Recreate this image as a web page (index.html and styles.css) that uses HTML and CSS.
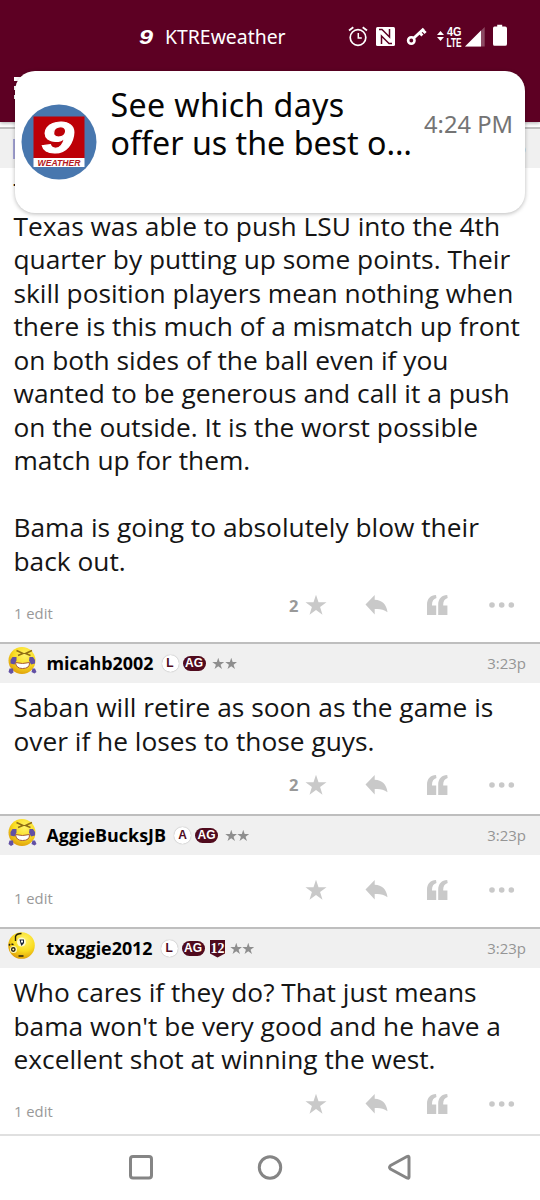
FILE: index.html
```html
<!DOCTYPE html>
<html lang="en">
<head>
<meta charset="utf-8">
<title>Forum thread</title>
<link rel="stylesheet" href="styles.css">
</head>
<body>
<svg class="defs" width="0" height="0" aria-hidden="true">
  <symbol id="star" viewBox="0 0 22 22"><path d="M11 .8l2.500 7.500h8l-6.400 4.700 2.400 7.700-6.500-4.700-6.500 4.700L6.900 13 .5 8.300h8z"/></symbol>
  <symbol id="reply" viewBox="0 0 23 20"><path d="M.5 9.500L9.700 0v4.700C17 5 21.500 9 22.500 17.200 18.500 14 14.500 13.700 9.700 14v5.500z"/></symbol>
  <symbol id="quote" viewBox="0 0 21 20"><path d="M0 20V9.500C0 4 3.500 0 9 0L9.500 3C6.500 4 5 6 5 9.500V10.500h4.200V20zM11.200 20V9.500C11.200 4 14.700 0 20.200 0L20.700 3c-3 1-4.500 3-4.500 6.500V10.500h4.200V20z"/></symbol>
  <symbol id="more" viewBox="0 0 26 6"><circle cx="3" cy="3" r="2.800"/><circle cx="12.700" cy="3" r="2.800"/><circle cx="22.300" cy="3" r="2.800"/></symbol>
  <radialGradient id="skin" cx=".6" cy=".3" r=".75"><stop offset="0" stop-color="#fff36a"/><stop offset=".55" stop-color="#f9dc20"/><stop offset="1" stop-color="#dc9908"/></radialGradient>
  <symbol id="laugh" viewBox="0 0 30 30">
    <circle cx="15" cy="14.500" r="13.500" fill="url(#skin)"/>
    <path d="M9.500 4.500l6.500 3-5 2M25 4.500l-6.500 3 5 2" fill="none" stroke="#8f6d14" stroke-width="1.500"/>
    <path d="M8.500 16.500q7 2 14 0 .5 6-7 6Q9 22.500 8.500 16.500z" fill="#fff" stroke="#a85a38" stroke-width="1"/>
    <path d="M5.500 11h4v3.500l-2 4-4-1v-3.500zM22.500 11h3.500l2 3v3.500l-4 1-2-4zM2.500 22.500h3.500l.500 4-2.500 1.500-2.500-2zM25.500 22.500h2.500l1.500 3.500-2 1.500-3-1.500z" fill="#6250a4"/>
  </symbol>
  <symbol id="think" viewBox="0 0 30 30">
    <circle cx="14.500" cy="14.500" r="13.300" fill="url(#skin)"/>
    <circle cx="14.500" cy="11" r="4.500" fill="#fffbd2"/><circle cx="6.500" cy="18.500" r="3.500" fill="#fff8b8"/>
    <path d="M8.500 10V5.500q1-3 6-3M2 14.500l1-1.500M4.500 13l2 .7M11.500 25h5" fill="none" stroke="#26200c" stroke-width="1.400"/>
    <path d="M12.500 8.500h4.500v3.500l-2.500 3-1-2.500z" fill="#172337"/><path d="M14 9.500h2v2h-2z" fill="#fff"/>
    <circle cx="6.300" cy="18.500" r="1.700" fill="none" stroke="#2b2411" stroke-width="1.400"/>
  </symbol>
</svg>

<div class="screen">
  <header class="top">
    <div class="status">
      <div class="ticker"><b class="nine">9</b><span class="app">KTREweather</span></div>
      <svg class="status-icons" width="162" height="26" viewBox="348 24 162 26">
        <g fill="none" stroke="#fff">
          <circle cx="358" cy="37.500" r="7.800" stroke-width="1.700"/>
          <path d="M358.300 33v5h3.500" stroke-width="1.500"/>
          <path d="M349 30.500l4.300-3.300M367 30.500l-4.300-3.300" stroke-width="1.800"/>
          <circle cx="411.300" cy="40.500" r="3.200" stroke-width="2.600"/>
          <path d="M413.600 38.200L423.800 28.800M419.500 32.500l2.900 3.100M422.500 29.900l3.100 3.200" stroke-width="2.900"/>
        </g>
        <rect x="376" y="27" width="19" height="19" rx="1.500" fill="#fff"/>
        <path d="M379 29.500l3 0 7.500 7.500V29M392 43.500l-3 0-7.500-7.500V44" fill="none" stroke="#5d0023" stroke-width="1.500"/>
        <path d="M437 35l3.500-4 3.500 4zM437 37l3.500 4 3.500-4z" fill="#fff"/>
        <text x="447" y="36.300" class="net" textLength="14.500" lengthAdjust="spacingAndGlyphs">4G</text>
        <text x="446.500" y="46.700" class="net" textLength="15" lengthAdjust="spacingAndGlyphs">LTE</text>
        <path d="M465 46.500L484.700 27v19.500z" fill="#8c4a63"/><path d="M465 46.500L481 30.600v15.900z" fill="#fff"/>
        <path d="M494.500 26.600h2.700v-1.900h5v1.900h2.900q1.900 0 1.900 1.900v15.400q0 1.900-1.900 1.900h-10.600q-1.500 0-1.500-1.900V28.500q0-1.900 1.500-1.900z" fill="#fff"/>
      </svg>
    </div>
    <div class="menu"><i></i><i></i><i></i></div>
  </header>

  <main class="thread">
    <article class="post p1">
      <div class="head"><span class="sliver"></span><time>3:22p</time></div>
      <p class="text">T<br>Texas was able to push LSU into the 4th<br>quarter by putting up some points. Their<br>skill position players mean nothing when<br>there is this much of a mismatch up front<br>on both sides of the ball even if you<br>wanted to be generous and call it a push<br>on the outside. It is the worst possible<br>match up for them.<br><br>Bama is going to absolutely blow their<br>back out.</p>
      <footer class="foot"><span class="edit">1 edit</span><div class="actions"><b class="count">2</b><svg class="star"><use href="#star"/></svg><svg class="reply"><use href="#reply"/></svg><svg class="quote"><use href="#quote"/></svg><svg class="more"><use href="#more"/></svg></div></footer>
    </article>

    <article class="post p2">
      <div class="head"><svg class="face"><use href="#laugh"/></svg><b class="name">micahb2002</b><span class="round">L</span><span class="ag">AG</span><svg class="rank"><use href="#star"/></svg><svg class="rank"><use href="#star"/></svg><time>3:23p</time></div>
      <p class="text">Saban will retire as soon as the game is<br>over if he loses to those guys.</p>
      <footer class="foot"><div class="actions"><b class="count">2</b><svg class="star"><use href="#star"/></svg><svg class="reply"><use href="#reply"/></svg><svg class="quote"><use href="#quote"/></svg><svg class="more"><use href="#more"/></svg></div></footer>
    </article>

    <article class="post p3">
      <div class="head"><svg class="face"><use href="#laugh"/></svg><b class="name">AggieBucksJB</b><span class="round">A</span><span class="ag">AG</span><svg class="rank"><use href="#star"/></svg><svg class="rank"><use href="#star"/></svg><time>3:23p</time></div>
      <footer class="foot"><span class="edit">1 edit</span><div class="actions"><svg class="star"><use href="#star"/></svg><svg class="reply"><use href="#reply"/></svg><svg class="quote"><use href="#quote"/></svg><svg class="more"><use href="#more"/></svg></div></footer>
    </article>

    <article class="post p4">
      <div class="head"><svg class="face"><use href="#think"/></svg><b class="name">txaggie2012</b><span class="round">L</span><span class="ag">AG</span><svg class="shield" viewBox="0 0 15 18"><path d="M0 0h15v13.500L7.500 17.500 0 13.500z" fill="#500b1e"/><text x="7.500" y="13" text-anchor="middle" class="twelve-text">12</text></svg><svg class="rank"><use href="#star"/></svg><svg class="rank"><use href="#star"/></svg><time>3:23p</time></div>
      <p class="text">Who cares if they do? That just means<br>bama won't be very good and he have a<br>excellent shot at winning the west.</p>
      <footer class="foot"><span class="edit">1 edit</span><div class="actions"><svg class="star"><use href="#star"/></svg><svg class="reply"><use href="#reply"/></svg><svg class="quote"><use href="#quote"/></svg><svg class="more"><use href="#more"/></svg></div></footer>
    </article>
  </main>

  <nav class="nav">
    <svg width="540" height="64" viewBox="0 1136 540 64" fill="none" stroke="#858585" stroke-width="3">
      <rect x="130.500" y="1156.500" width="21" height="21.500" rx="2.500"/>
      <circle cx="270" cy="1167.500" r="10.700"/>
      <path d="M390.500 1165.500l16.500-9q2-1 2 1v19.500q0 2-2 1l-16.500-9q-2-1.700 0-3.500z"/>
    </svg>
  </nav>

  <aside class="toast">
    <svg class="logo" width="76" height="76" viewBox="0 0 76 76">
      <circle cx="38" cy="38" r="37.500" fill="#4877ae"/>
      <rect x="12.500" y="12.500" width="51" height="42" fill="#bd0007"/>
      <rect x="12.500" y="54" width="51" height="9" fill="#fff"/>
      <text x="20" y="49" class="logo-nine" textLength="33" lengthAdjust="spacingAndGlyphs">9</text>
      <text x="16.500" y="61.500" class="logo-word" textLength="43" lengthAdjust="spacingAndGlyphs">WEATHER</text>
    </svg>
    <div class="message"><span class="m1">See which days</span><span class="m2">offer us the best o…</span></div>
    <span class="clock">4:24 PM</span>
  </aside>
</div>
</body>
</html>
```
FILE: styles.css
```css
* { box-sizing: border-box; }
body { margin: 0; background: #fff; font-family: "Open Sans", "Noto Sans", sans-serif; }
.defs { position: absolute; }
.screen { position: relative; width: 540px; height: 1200px; overflow: hidden; display: flex; flex-direction: column; }

.top { height: 122px; background: #5d0023; flex: none; color: #fff; box-shadow: 0 1px 4px rgba(0,0,0,.35); }
.status { height: 76px; display: flex; justify-content: space-between; padding: 24px 30px 0 139px; align-items: flex-start; }
.ticker { display: flex; align-items: center; height: 26px; }
.nine { width: 26px; font: italic bold 21px/26px "Liberation Sans", sans-serif; transform: scaleX(1.2); transform-origin: left; }
.app { font: 19.4px/26px "Noto Sans", sans-serif; white-space: nowrap; }
.net { font: bold 12px "Liberation Sans", sans-serif; fill: #fff; }
.menu { display: flex; flex-direction: column; gap: 5px; padding: 1px 0 0 14px; width: 40px; }
.menu i { height: 4px; background: #fff; }

.thread { padding-top: 5px; flex: none; }
.post { border-top: 2px solid #bebebe; display: flex; flex-direction: column; }
.p1 { height: 515px; }
.p2 { height: 172px; }
.p3 { height: 113px; }
.p4 { height: 207px; }
.head { height: 39px; background: #f0f0f0; display: flex; align-items: center; padding: 0 14px 0 7px; flex: none; }
.sliver { width: 20px; height: 20px; background: #a5a5d8; margin-left: 6px; }
.face { width: 30px; height: 30px; margin-right: 9.5px; margin-top: -5px; flex: none; }
.name { font-size: 17.9px; line-height: 24px; color: #000; white-space: nowrap; margin-top: -1px; }
.round, .ag { font: bold 12px/17px "Liberation Sans", sans-serif; text-align: center; flex: none; }
.round { width: 17px; height: 17px; border-radius: 50%; background: #fff; color: #500b1e; box-shadow: 0 0 1px #888; margin-left: 8px; }
.ag { width: 23px; height: 15px; line-height: 15px; border-radius: 8px; background: #500b1e; color: #fff; margin-left: 4px; margin-right: 6.5px; }
.rank { width: 12.5px; height: 13px; fill: #8e8e8e; }
.shield { width: 15px; height: 18px; margin-right: 5px; margin-left: -1.5px; }
.twelve-text { font: bold 14px "Liberation Serif", serif; fill: #fff; }
time { margin-left: auto; font-size: 15px; color: #959595; margin-top: -2px; }
.text { margin: 0; padding: 8px 14px 0 13.5px; font-size: 26.3px; line-height: 33.55px; color: #151515; white-space: nowrap; }

.foot { margin-top: auto; height: 50px; display: flex; align-items: flex-start; padding: 0 25px 0 14px; }
.edit { font-size: 14.8px; line-height: 20px; color: #999; margin-top: 11px; }
.p4 .edit { margin-top: 10px; }
.actions { margin-left: auto; display: flex; align-items: center; height: 26px; fill: #c9c9c9; }
.p2 .foot, .p4 .foot { height: 43px; }
.p2 .actions { height: 27px; }
.count { font-size: 16.5px; color: #999; margin-right: 6.500px; }
.star { width: 22px; height: 22px; margin-right: 38px; }
.reply { width: 23px; height: 20px; margin-right: 39px; }
.quote { width: 21px; height: 20px; margin-right: 41px; }
.more { width: 26px; height: 6px; }

.nav { border-top: 2px solid #e0e0e0; height: 66px; }
.nav svg { display: block; }

.toast { position: absolute; left: 15px; top: 71px; width: 510px; height: 142px; border-radius: 20px; background: #fff; box-shadow: 0 1px 4px rgba(0,0,0,.28); display: flex; align-items: flex-start; padding: 0 12px 0 5.5px; }
.logo { margin-top: 33px; flex: none; }
.logo-nine { font: italic bold 44px "Liberation Sans", sans-serif; fill: #fff; stroke: #fff; stroke-width: 1; }
.logo-word { font: italic bold 8.5px "Liberation Sans", sans-serif; fill: #b51a20; }
.message { margin: 15px 0 0 14px; display: flex; flex-direction: column; font: 32.2px/38px "Noto Sans", sans-serif; color: #060606; white-space: nowrap; }
.m1 { letter-spacing: .35px; }
.clock { margin: 37px 0 0 auto; font: 23.7px/32px "Noto Sans", sans-serif; color: #747474; white-space: nowrap; }
```
